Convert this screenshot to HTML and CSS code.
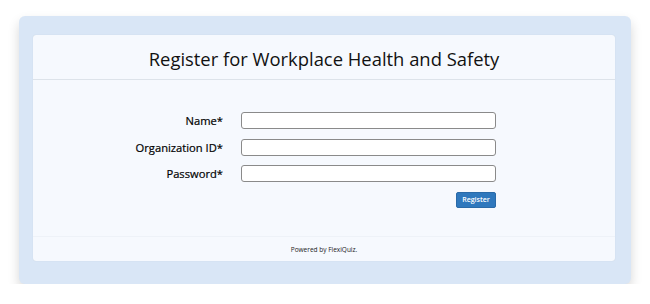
FILE: index.html
```html
<!DOCTYPE html>
<html lang="en">
<head>
<meta charset="UTF-8">
<meta name="viewport" content="width=device-width, initial-scale=1.0">
<title>Register for Workplace Health and Safety</title>
<link rel="stylesheet" href="styles.css">
</head>
<body>

<div class="panel">
  <div class="card">

    <!-- HEADER -->
    <div class="card-header">
      <h1>Register for Workplace Health and Safety</h1>
    </div>

    <!-- FORM -->
    <form class="reg-form" onsubmit="return false;">
      <div class="row">
        <label for="name">Name*</label>
        <input type="text" id="name">
      </div>
      <div class="row">
        <label for="org-id">Organization ID*</label>
        <input type="text" id="org-id">
      </div>
      <div class="row">
        <label for="password">Password*</label>
        <input type="password" id="password">
      </div>
      <div class="actions">
        <button type="submit">Register</button>
      </div>
    </form>

    <!-- FOOTER -->
    <div class="card-footer">Powered by FlexiQuiz.</div>

  </div>
</div>

</body>
</html>
```

FILE: styles.css
```css
body {
  margin: 0;
  background: #fff;
  font-family: "Open Sans", sans-serif;
  color: #111;
}

.panel {
  margin: 16px 19px 0;
  height: 268px;
  box-sizing: border-box;
  padding: 19px 16px 0 14px;
  background: #d9e6f6;
  border-radius: 6px;
  box-shadow: 0 6px 12px rgba(0, 0, 0, 0.16);
}

.card {
  height: 226px;
  background: #f6f9fe;
  border-radius: 3px;
  box-shadow: 0 0 1px rgba(0, 0, 0, 0.15);
  display: flex;
  flex-direction: column;
}

.card-header {
  height: 44px;
  border-bottom: 1px solid #dde3ea;
  display: flex;
  align-items: center;
  justify-content: center;
}
.card-header h1 {
  margin: 3px 0 0;
  font-size: 18.4px;
  font-weight: 400;
  color: #111;
}

.reg-form {
  padding: 32px 0 0;
}

.row {
  display: flex;
  align-items: center;
  height: 17px;
  margin-bottom: 9.5px;
}
.row label {
  width: 190px;
  text-align: right;
  font-size: 11.2px;
  color: #000;
  -webkit-text-stroke: 0.2px #000;
}
.row input {
  margin-left: 18px;
  width: 255px;
  height: 17px;
  box-sizing: border-box;
  border: 1px solid #8a8a8a;
  border-radius: 3px;
  background: #fff;
  padding: 0 4px;
}

.actions {
  width: 463px;
  display: flex;
  justify-content: flex-end;
}
.actions button {
  width: 40px;
  height: 16px;
  padding: 0;
  border: 1px solid #2a6aa8;
  border-radius: 2px;
  background: #2f78bd;
  color: #fff;
  font-family: "Open Sans", sans-serif;
  font-size: 7px;
  font-weight: 600;
}

.card-footer {
  margin-top: auto;
  height: 24px;
  text-align: center;
  font-size: 6.5px;
  color: #222;
  line-height: 26px;
  border-top: 1px solid #eef2f8;
}
```
